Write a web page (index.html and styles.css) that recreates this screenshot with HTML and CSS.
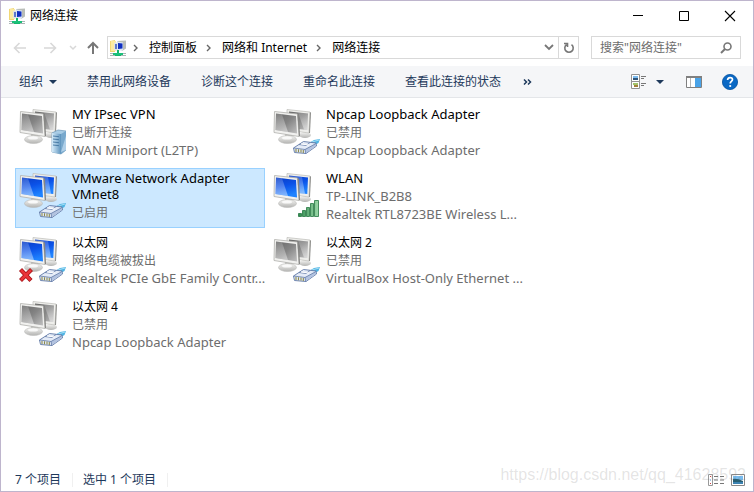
FILE: index.html
```html
<!DOCTYPE html>
<html lang="zh-CN">
<head>
<meta charset="utf-8">
<title>网络连接</title>
<link rel="stylesheet" href="styles.css">
</head>
<body>
<svg class="defs" width="0" height="0" aria-hidden="true">
  <defs>
    <linearGradient id="blue" x1="0" y1="0" x2=".3" y2="1"><stop offset="0" stop-color="#0a3cc4"/><stop offset=".5" stop-color="#0b52e8"/><stop offset="1" stop-color="#1f83ff"/></linearGradient>
    <linearGradient id="gray" x1="0" y1="0" x2="1" y2="1"><stop offset="0" stop-color="#666"/><stop offset=".5" stop-color="#858585"/><stop offset="1" stop-color="#c0c0c0"/></linearGradient>
    <linearGradient id="shine" x1="0" y1="0" x2="0" y2="1"><stop offset="0" stop-color="#fff" stop-opacity=".15"/><stop offset="1" stop-color="#fff" stop-opacity=".45"/></linearGradient>
    <linearGradient id="metal" x1="0" y1="0" x2="0" y2="1"><stop offset="0" stop-color="#f6f6f4"/><stop offset="1" stop-color="#b4b4b2"/></linearGradient>
    <linearGradient id="server" x1="0" y1="0" x2="1" y2="0"><stop offset="0" stop-color="#d6ecfa"/><stop offset="1" stop-color="#5d93bd"/></linearGradient>
    <linearGradient id="bars" x1="0" y1="0" x2="1" y2="0"><stop offset="0" stop-color="#2e8a4c"/><stop offset="1" stop-color="#9bd8a8"/></linearGradient>
    <g id="frames">
      <ellipse cx="33" cy="27" rx="6" ry="3" fill="url(#metal)"/>
      <path d="M15 1.500L38 4 37 25 15 22z" fill="#eeeeeb" stroke="#bcbcb8" stroke-width=".7"/>
      <path d="M38 4l1 .8L38 25l-1 0z" fill="#8d8d8a"/>
    </g>
    <g id="front">
      <path d="M13 26l7 1 1 5-8-1z" fill="#b7b7b4"/>
      <ellipse cx="15.500" cy="31.500" rx="9" ry="4" fill="url(#metal)" stroke="#b5b5b2" stroke-width=".5"/>
      <ellipse cx="15" cy="30" rx="5" ry="1.500" fill="#fff" opacity=".8"/>
      <path d="M2.500 3.500L25.500 6 27 28.500 2 24.500z" fill="#f1f1ef" stroke="#b0b0ac" stroke-width=".8"/>
      <path d="M25.500 6l1.500.7L28 28l-1 .5z" fill="#858583"/>
    </g>
    <symbol id="pc-blue" viewBox="0 0 48 48">
      <use href="#frames"/><path d="M17 3.500L36 5.500 35.300 22 17 20z" fill="url(#blue)"/>
      <path d="M17 3.500L30 5 33 21.800 17 20z" fill="url(#shine)"/>
      <use href="#front"/><path d="M4 5.500L24 8 25 25.500 3.500 22z" fill="url(#blue)"/>
      <path d="M4 5.500L10 6.200 16 24 3.500 22z" fill="url(#shine)"/>
    </symbol>
    <symbol id="pc-gray" viewBox="0 0 48 48">
      <use href="#frames"/><path d="M17 3.500L36 5.500 35.300 22 17 20z" fill="url(#gray)"/>
      <path d="M26 4.500L36 5.500 35.300 22 32 21.600z" fill="url(#shine)"/>
      <use href="#front"/><path d="M4 5.500L24 8 25 25.500 3.500 22z" fill="url(#gray)"/>
      <path d="M4 5.500L10 6.200 16 24 3.500 22z" fill="url(#shine)"/>
    </symbol>
    <symbol id="plug" viewBox="0 0 48 48">
      <path d="M37 35l5-3 6-1-1.500 4-5 3z" fill="#4fb4e4"/>
      <path d="M40 34l7-2" stroke="#a5def5" stroke-width="1"/>
      <path d="M21.500 40l10-6.500 12.500 1.500.500 3L34 45.500l-11.500-1z" fill="#e4ebf7" stroke="#6078a6" stroke-width=".9"/>
      <path d="M33 41.500l11-6v2.500L34 45z" fill="#b3c3e0"/>
      <path d="M21.500 40l11.500 1.500 11-6M33 41.500l.8 4M27 36.500l7 1 4-3" fill="none" stroke="#6078a6" stroke-width=".8"/>
      <path d="M24 41v3M26.500 41.300v3M29 41.600v3M31.300 42v3" stroke="#8c8a4d" stroke-width="1.100"/>
      <path d="M29 36l8 1" stroke="#fff" stroke-width="1"/>
    </symbol>
    <symbol id="tower" viewBox="0 0 48 48">
      <path d="M34 25l6-3 8 1v19l-5 4-9-2z" fill="#a8cce5" stroke="#6c96b8" stroke-width=".7"/>
      <path d="M34 25l9 1v20l-9-2z" fill="url(#server)"/>
      <path d="M43 26l5-3v19l-5 4z" fill="#79a9cd"/>
      <path d="M35 28l6 .7M35 31l6 .7M35 34l6 .7M35 37l6 .7" stroke="#4b7da7" stroke-width="1"/>
      <path d="M43 44l5-16v14z" fill="#d4eafa" opacity=".6"/>
    </symbol>
    <symbol id="signal" viewBox="0 0 48 48">
      <g fill="url(#bars)" stroke="#247641" stroke-width=".8"><path d="M26.500 41.500h3v3h-3zM30.500 38.500h3v6h-3zM34.500 35.500h3v9h-3zM38.500 31.500h3v13h-3zM42.500 28.500h4v16h-4z"/></g>
    </symbol>
    <symbol id="unplugged" viewBox="0 0 48 48">
      <path d="M2.500 33.500l10.500 11M13.500 33.500L2.500 44.500" fill="none" stroke="#a51217" stroke-width="4.200"/>
      <path d="M3 34l9.500 10M13 34L3 44" fill="none" stroke="#ea3438" stroke-width="2.600"/>
    </symbol>
    <symbol id="folder" viewBox="0 0 16 16">
      <path d="M0 1l5-1v12H0z" fill="#f1d775"/><path d="M1 1h5v10H1z" fill="#fbeaa0"/>
      <path d="M7 1l9-.5v8L12 11z" fill="#b9bdb8"/>
      <path d="M4 3l5-1v9l-5-1z" fill="#dfe3e6"/><path d="M7 1.500l6 1v8l-6 0z" fill="#d9e4f4"/>
      <path d="M8 3l4.500.5v5L8 9z" fill="#102fc0"/><path d="M5 4h2v5H5z" fill="#5d78c9"/>
      <path d="M0 13.500h16M0 15.500h16" stroke="#a9b4b4"/><path d="M7 10h2v3h2v3H5v-3h2z" fill="#15b66c"/>
      <path d="M3 13h10v2H3z" fill="#1ac07a"/>
    </symbol>
  </defs>
</svg>
<main class="window">
  <header class="titlebar">
    <svg class="icon16"><use href="#folder"/></svg>
    <h1 class="title">网络连接</h1>
    <div class="captions">
      <button class="caption" aria-label="最小化"><svg class="icon12" viewBox="0 0 12 12"><path d="M1 5.500h10" stroke="#000"/></svg></button>
      <button class="caption" aria-label="最大化"><svg class="icon12" viewBox="0 0 12 12"><path d="M1.500 1.500h9v9h-9z" fill="none" stroke="#000"/></svg></button>
      <button class="caption" aria-label="关闭"><svg class="icon12" viewBox="0 0 12 12"><path d="M1 1l10 10M11 1L1 11" stroke="#000" stroke-width="1.100"/></svg></button>
    </div>
  </header>
  <div class="navrow">
    <nav class="history">
      <button class="nav back" aria-label="后退" disabled><svg width="14" height="12" viewBox="0 0 14 12"><path d="M13 6H2M6.500 1L1.500 6l5 5" fill="none" stroke="#d8d8d8" stroke-width="1.600"/></svg></button>
      <button class="nav forward" aria-label="前进" disabled><svg width="14" height="12" viewBox="0 0 14 12"><path d="M1 6h11M7.500 1l5 5-5 5" fill="none" stroke="#d8d8d8" stroke-width="1.600"/></svg></button>
      <button class="nav" aria-label="最近位置" disabled><svg width="8" height="6" viewBox="0 0 8 6"><path d="M1 1l3 3 3-3" fill="none" stroke="#d8d8d8" stroke-width="1.500"/></svg></button>
      <button class="nav up" aria-label="上移"><svg width="12" height="13" viewBox="0 0 12 13"><path d="M6 13V2M1 7l5-5 5 5" fill="none" stroke="#777" stroke-width="2"/></svg></button>
    </nav>
    <div class="address">
      <svg class="icon16"><use href="#folder"/></svg>
      <svg class="sep" viewBox="0 0 6 8"><path d="M1 1l3 3-3 3" fill="none" stroke="#666" stroke-width="1.400"/></svg>
      <a class="crumb" href="#">控制面板</a>
      <svg class="sep" viewBox="0 0 6 8"><path d="M1 1l3 3-3 3" fill="none" stroke="#666" stroke-width="1.400"/></svg>
      <a class="crumb" href="#">网络和 Internet</a>
      <svg class="sep" viewBox="0 0 6 8"><path d="M1 1l3 3-3 3" fill="none" stroke="#666" stroke-width="1.400"/></svg>
      <a class="crumb" href="#">网络连接</a>
      <button class="drop" aria-label="以前的位置"><svg width="10" height="7" viewBox="0 0 10 7"><path d="M1 1l4 4 4-4" fill="none" stroke="#777" stroke-width="1.800"/></svg></button>
      <button class="refresh" aria-label="刷新"><svg width="12" height="12" viewBox="0 0 12 12"><path d="M8.500 2.700A4.200 4.200 0 1 1 3.500 2.700M1 1.500h3.500V5" fill="none" stroke="#777" stroke-width="1.600"/></svg></button>
    </div>
    <div class="search">
      <input class="search-input" type="search" aria-label="搜索" placeholder="搜索&quot;网络连接&quot;">
      <svg class="icon12" viewBox="0 0 12 12"><circle cx="7.500" cy="4.500" r="3.500" fill="none" stroke="#777" stroke-width="1.600"/><path d="M5 7L1 11" stroke="#777" stroke-width="2"/></svg>
    </div>
  </div>
  <div class="toolbar">
    <button class="command">组织<svg class="caret" viewBox="0 0 8 4"><path d="M0 0h8L4 4z" fill="#1e395b"/></svg></button>
    <button class="command">禁用此网络设备</button>
    <button class="command">诊断这个连接</button>
    <button class="command">重命名此连接</button>
    <button class="command">查看此连接的状态</button>
    <button class="command more" aria-label="更多"><svg width="9" height="6" viewBox="0 0 9 6"><path d="M1 .5L3.500 3 1 5.500M5 .5L7.500 3 5 5.500" fill="none" stroke="#1e395b" stroke-width="1.500"/></svg></button>
    <div class="views">
      <button class="tool" aria-label="更改视图"><svg width="16" height="16" viewBox="0 0 16 16"><path d="M.5.500h8v7h-8zM.5 7.500h8v7h-8z" fill="#fff" stroke="#929292"/><path d="M2 2h5v2H2z" fill="#7cbcf0"/><path d="M2 4h5v2H2z" fill="#31567a"/><path d="M2 9h5v2H2z" fill="#a2c36a"/><path d="M3 11h4v2H3z" fill="#a2803b"/><path d="M10 2.500h5M10 4.500h3M10 9.500h5M10 11.500h3" stroke="#777"/></svg></button>
      <button class="tool" aria-label="更多选项"><svg class="caret" viewBox="0 0 8 4"><path d="M0 0h8L4 4z" fill="#1e395b"/></svg></button>
      <button class="tool pane" aria-label="预览窗格"><svg width="16" height="12" viewBox="0 0 16 12"><path d="M.5.500h15v11H.5z" fill="#fff" stroke="#808080"/><path d="M0 0h16v2H0z" fill="#808080"/><path d="M4.500 2v9" stroke="#b5b5b5"/><path d="M9 2h6v9H9z" fill="#4aa3e8"/></svg></button>
      <button class="tool" aria-label="帮助"><svg width="16" height="16" viewBox="0 0 16 16"><circle cx="8" cy="8" r="7.600" fill="#0a68c4" stroke="#04509f" stroke-width=".8"/><path d="M5.600 6c0-3.200 4.900-3.200 4.900-.4C10.500 7.300 8.200 7.500 8.200 9.500" fill="none" stroke="#fff" stroke-width="1.700"/><circle cx="8.200" cy="12" r="1.100" fill="#fff"/></svg></button>
    </div>
  </div>
  <section class="items" aria-label="网络连接">
    <button class="item"><svg class="device"><use href="#pc-gray"/><use href="#tower"/></svg><span class="text"><span class="name">MY IPsec VPN</span><span class="line zh">已断开连接</span><span class="line">WAN Miniport (L2TP)</span></span></button>
    <button class="item"><svg class="device"><use href="#pc-gray"/><use href="#plug"/></svg><span class="text"><span class="name">Npcap Loopback Adapter</span><span class="line zh">已禁用</span><span class="line">Npcap Loopback Adapter</span></span></button>
    <button class="item selected" aria-pressed="true"><svg class="device"><use href="#pc-blue"/><use href="#plug"/></svg><span class="text"><span class="name">VMware Network Adapter VMnet8</span><span class="line zh">已启用</span></span></button>
    <button class="item"><svg class="device"><use href="#pc-blue"/><use href="#signal"/></svg><span class="text"><span class="name">WLAN</span><span class="line">TP-LINK_B2B8</span><span class="line">Realtek RTL8723BE Wireless L...</span></span></button>
    <button class="item"><svg class="device"><use href="#pc-blue"/><use href="#plug"/><use href="#unplugged"/></svg><span class="text"><span class="name zh">以太网</span><span class="line zh">网络电缆被拔出</span><span class="line">Realtek PCIe GbE Family Contr...</span></span></button>
    <button class="item"><svg class="device"><use href="#pc-gray"/><use href="#plug"/></svg><span class="text"><span class="name zh">以太网 2</span><span class="line zh">已禁用</span><span class="line">VirtualBox Host-Only Ethernet ...</span></span></button>
    <button class="item"><svg class="device"><use href="#pc-gray"/><use href="#plug"/></svg><span class="text"><span class="name zh">以太网 4</span><span class="line zh">已禁用</span><span class="line">Npcap Loopback Adapter</span></span></button>
  </section>
  <footer class="status">
    <span class="count">7 个项目</span>
    <span class="count">选中 1 个项目</span>
    <div class="modes">
      <button class="tool" aria-label="详细信息"><svg width="16" height="12" viewBox="0 0 16 12"><path d="M.5.500h4v11h-4z" fill="#fff" stroke="#999"/><path d="M2 2.500h1M2 9.500h1" stroke="#c44"/><path d="M2 6h1" stroke="#48c"/><path d="M6 2.500h4M12 2.500h4M6 6h4M12 6h4M6 9.500h4M12 9.500h4" stroke="#777"/></svg></button>
      <button class="tool" aria-label="大图标"><svg width="14" height="12" viewBox="0 0 14 12"><path d="M.5.500h13v11H.5z" fill="#fff" stroke="#888"/><path d="M2 2h10v4H2z" fill="#78bdf0"/><path d="M2 5q4-1 10 2v3H2z" fill="#285f73"/><path d="M2 8h10v2H2z" fill="#3c83b2"/></svg></button>
    </div>
    <span class="watermark">https://blog.csdn.net/qq_41628592</span>
  </footer>
</main>
</body>
</html>
```
FILE: styles.css
```css
* { box-sizing: border-box; }
body {
  margin: 0;
  font: 12px/18px "Noto Sans", "Noto Sans CJK SC", sans-serif;
  color: #000;
}
button {
  display: flex;
  align-items: center;
  margin: 0;
  padding: 0;
  border: 0;
  background: none;
  color: inherit;
  font: inherit;
  text-align: left;
}
svg { display: block; flex: none; }
.defs { position: absolute; }
.icon16 { width: 16px; height: 16px; }
.icon12 { width: 12px; height: 12px; }
.window {
  display: flex;
  flex-direction: column;
  min-height: 100vh;
  border: 1px solid #beb5cd;
  background: #fff;
}
.titlebar {
  display: flex;
  align-items: center;
  height: 29px;
  padding-left: 8px;
}
.title { margin: 0 0 0 5px; font-size: 12px; font-weight: 400; }
.captions { display: flex; margin-left: auto; }
.caption { justify-content: center; width: 46px; height: 28px; }
.navrow {
  display: flex;
  align-items: center;
  padding: 6px 12px 7px;
}
.history { display: flex; align-items: center; width: 94px; }
.back { padding-right: 16px; }
.forward { padding-right: 12px; }
.up { margin-left: 10px; }
.address {
  display: flex;
  flex: 1;
  align-items: center;
  height: 23px;
  padding-left: 2px;
  border: 1px solid #d9d9d9;
}
.sep { width: 6px; height: 8px; margin: 0 10px 0 9px; }
.icon16 + .sep { margin-left: 7px; }
.crumb { color: inherit; text-decoration: none; white-space: nowrap; }
.drop { margin-left: auto; padding: 0 4px; }
.refresh {
  align-self: stretch;
  justify-content: center;
  width: 20px;
  border-left: 1px solid #d9d9d9;
}
.search {
  display: flex;
  align-items: center;
  width: 150px;
  height: 23px;
  margin-left: 12px;
  padding: 0 8px;
  border: 1px solid #d9d9d9;
}
.search-input {
  flex: 1;
  min-width: 0;
  padding: 0;
  border: 0;
  outline: 0;
  font: inherit;
}
.search-input::placeholder { color: #6d6d6d; opacity: 1; }
.toolbar {
  display: flex;
  align-items: center;
  gap: 30px;
  height: 32px;
  padding: 0 15px 0 18px;
  border-bottom: 1px solid #e4e6e9;
  background: #f5f6f8;
  color: #1e395b;
}
.command { white-space: nowrap; }
.caret { width: 8px; height: 4px; }
.command .caret { margin-left: 6px; }
.more { margin-left: -8px; }
.views { display: flex; align-items: center; gap: 9px; margin-left: auto; }
.pane { margin: 0 11px 0 13px; }
.items {
  display: grid;
  grid-template-columns: repeat(auto-fill, 250px);
  grid-auto-rows: 60px;
  gap: 4px;
  padding: 6px 14px;
}
.item {
  align-items: flex-start;
  gap: 6px;
  padding: 1px 0 1px 2px;
  border: 1px solid transparent;
}
.selected { border-color: #99d1ff; background: #cce8ff; }
.device { width: 48px; height: 48px; margin-top: 2px; }
.text { display: flex; flex: 1; flex-direction: column; min-width: 0; }
.name, .line { padding-bottom: 2px; font-size: 13px; line-height: 16px; }
.line { color: #6d6d6d; white-space: nowrap; }
.zh { padding-bottom: 0; font-size: 12px; line-height: 18px; }
.status {
  position: relative;
  display: flex;
  align-items: center;
  gap: 10px;
  height: 24px;
  margin-top: auto;
  padding: 2px 8px 0 14px;
  color: #1e395b;
}
.count { padding-right: 11px; border-right: 1px solid #f0f0f0; line-height: 14px; }
.modes { display: flex; gap: 7px; margin-left: auto; }
.watermark {
  position: absolute;
  right: 7px;
  bottom: 6px;
  color: rgba(120, 120, 120, .2);
  font: 16px/20px "Liberation Sans", sans-serif;
  pointer-events: none;
}
```
